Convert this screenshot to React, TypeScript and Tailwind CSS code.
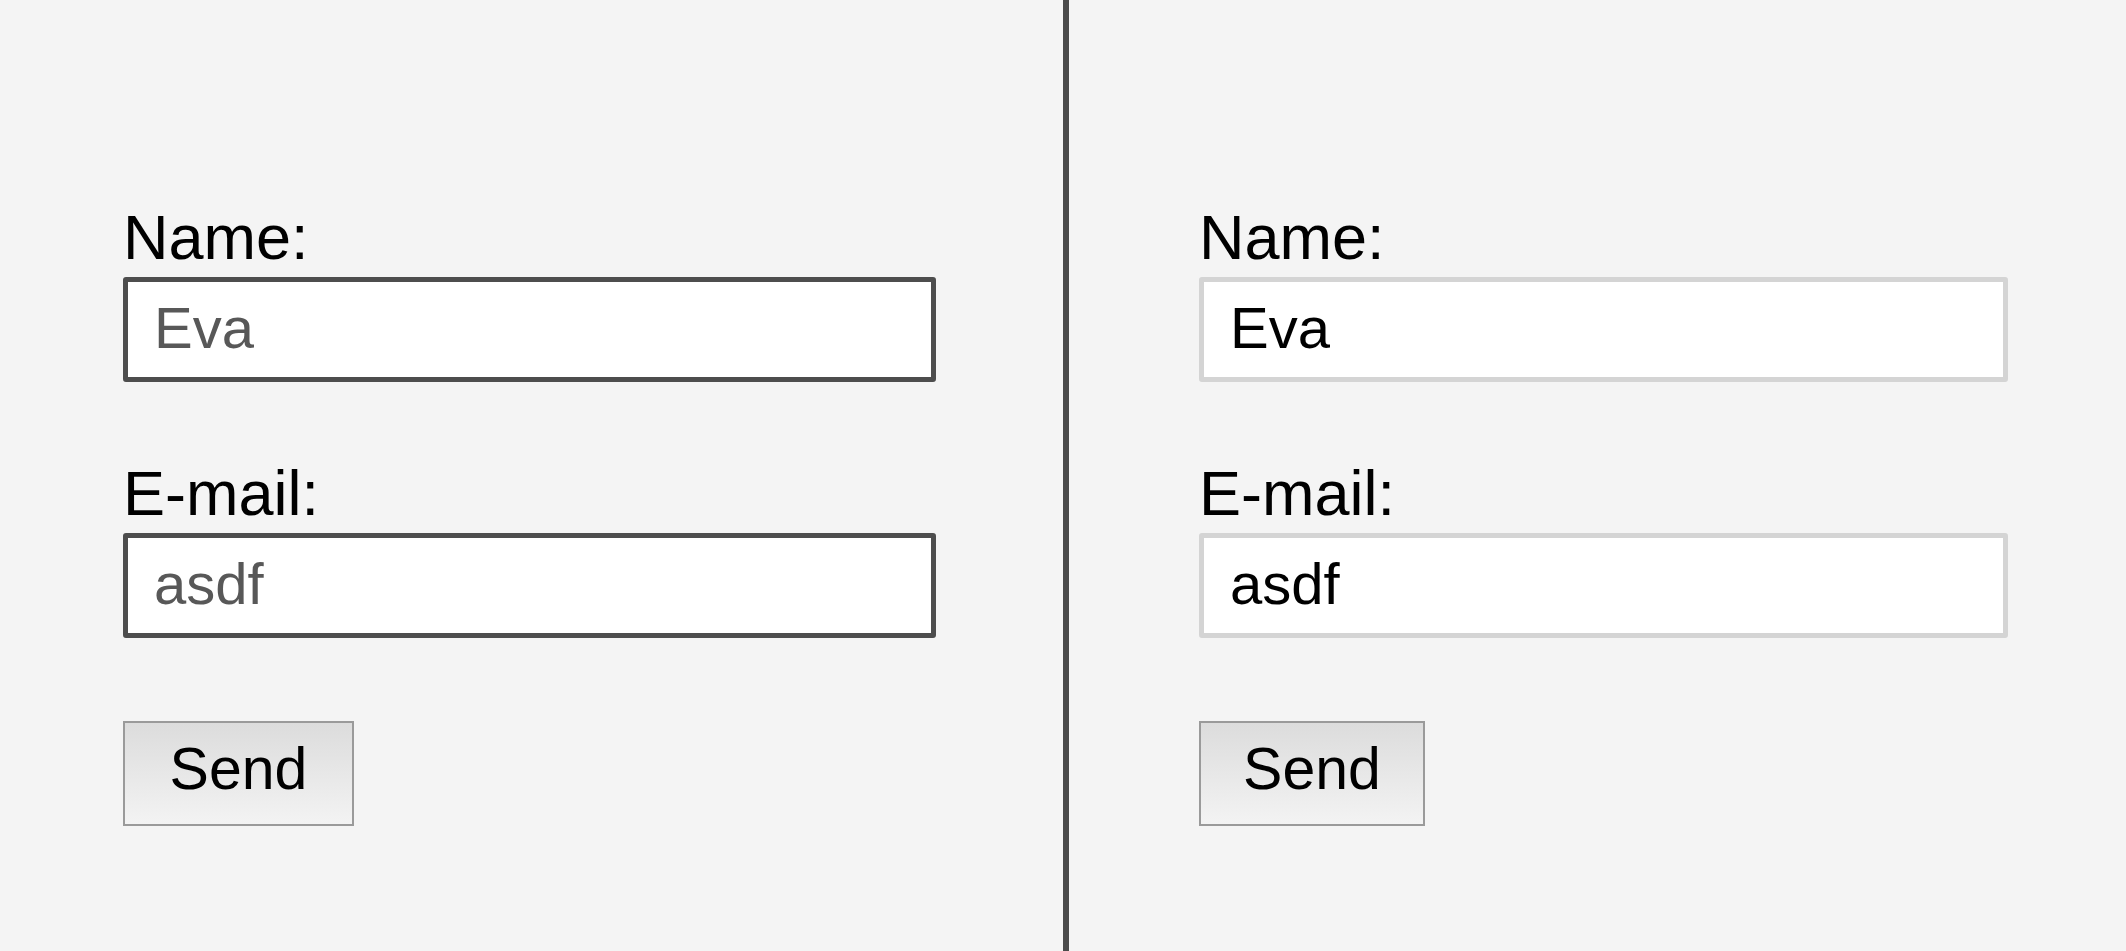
import React from 'react';

type FormPanelProps = {
    variant: 'dark' | 'light';
};

const FormPanel: React.FC<FormPanelProps> = ({ variant }) => {
    const dark = variant === 'dark';
    const inputClass = dark
        ? 'border-[5px] border-[#4d4d4d] text-[#585858]'
        : 'border-[5px] border-[#d4d4d4] text-black';

    return (
        <div className={`flex flex-col pt-[201px] ${dark ? 'w-[1063px] pl-[123px]' : 'flex-1 pl-[130px]'}`}>
            {/* Name */}
            <label className="text-[63px] leading-[72px] text-black">Name:</label>
            <input
                readOnly
                value="Eva"
                className={`mt-1 h-[105px] rounded-[3px] bg-white pb-[4px] pl-[26px] text-[58px] outline-none ${dark ? 'w-[813px]' : 'w-[809px]'} ${inputClass}`}
            />

            {/* E-mail */}
            <label className="mt-[75px] text-[63px] leading-[72px] text-black">E-mail:</label>
            <input
                readOnly
                value="asdf"
                className={`mt-1 h-[105px] rounded-[3px] bg-white pb-[4px] pl-[26px] text-[58px] outline-none ${dark ? 'w-[813px]' : 'w-[809px]'} ${inputClass}`}
            />

            <button
                className={`mt-[83px] flex h-[105px] items-center justify-center border-2 border-[#9a9a9a] bg-gradient-to-b from-[#dcdcdc] to-[#f3f3f3] pb-[8px] text-[59px] text-black ${dark ? 'w-[231px]' : 'w-[226px]'}`}
            >
                Send
            </button>
        </div>
    );
};

export default function App() {
    return (
        <div className="flex h-[951px] w-full overflow-hidden bg-[#f4f4f4] font-['Liberation_Sans',Arial,sans-serif]">
            <FormPanel variant="dark" />
            {/* Divider */}
            <div className="h-full w-[6px] shrink-0 bg-[#4a4a4a]" />
            <FormPanel variant="light" />
        </div>
    );
}
